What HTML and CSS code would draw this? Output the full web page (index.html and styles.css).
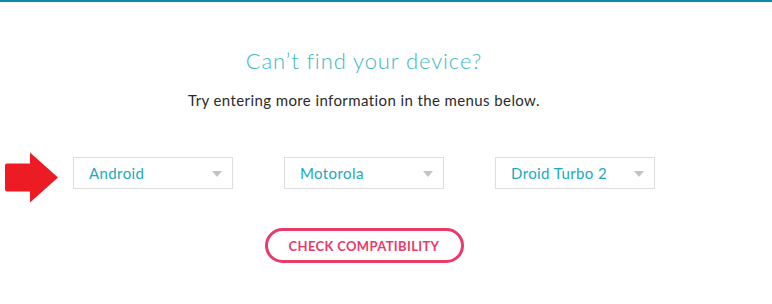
FILE: index.html
```html
<!DOCTYPE html>
<html>
<head>
<meta charset="utf-8">
<link rel="stylesheet" href="styles.css">
</head>
<body>
<div class="topbar"></div>
<main class="panel">
  <h1 class="title">Can’t find your device?</h1>
  <p class="subtitle">Try entering more information in the menus below.</p>
  <div class="selects">
    <svg class="arrow" width="54" height="51" viewBox="0 0 54 51">
      <path d="M2 11.5 H25 V0.5 L53 25.5 L25 50.5 V39.5 H2 Q0 39.5 0 37.5 V13.5 Q0 11.5 2 11.5 Z" fill="#ed1c24"/>
    </svg>
    <div class="select"><span>Android</span><i class="caret"></i></div>
    <div class="select"><span>Motorola</span><i class="caret"></i></div>
    <div class="select"><span>Droid Turbo 2</span><i class="caret"></i></div>
  </div>
  <button class="check">CHECK COMPATIBILITY</button>
</main>
</body>
</html>
```
FILE: styles.css
```css
html, body {
  margin: 0;
  padding: 0;
  background: #fff;
}
body {
  font-family: Lato, "Liberation Sans", sans-serif;
}
.topbar {
  height: 2px;
  background: #0b8ba3;
}
.panel {
  width: 728px;
  display: flex;
  flex-direction: column;
  align-items: center;
  position: relative;
}
.title {
  margin: 44px 0 0;
  font-size: 22px;
  font-weight: 300;
  color: #3cb8c5;
  line-height: 30px;
  letter-spacing: 0.9px;
}
.subtitle {
  margin: 14px 0 0;
  font-size: 15px;
  color: #2a2a2a;
  line-height: 20px;
  letter-spacing: 0.4px;
}
.selects {
  margin-top: 47px;
  display: flex;
  gap: 51px;
}
.arrow {
  position: absolute;
  left: 5px;
  top: 150px;
}
.select {
  box-sizing: border-box;
  width: 160px;
  height: 32px;
  border: 1px solid #dedede;
  display: flex;
  align-items: center;
  justify-content: space-between;
  padding: 0 10px 0 15px;
  color: #1aa9bf;
  font-size: 15px;
  letter-spacing: 0.4px;
}
.caret {
  width: 0;
  height: 0;
  border-left: 5px solid transparent;
  border-right: 5px solid transparent;
  border-top: 6px solid #c4c4c4;
  margin-top: 1px;
}
.check {
  margin-top: 39px;
  box-sizing: border-box;
  width: 199px;
  height: 35px;
  border: 3px solid #e93a69;
  border-radius: 18px;
  background: #fff;
  color: #e93a69;
  font-family: Lato, "Liberation Sans", sans-serif;
  font-weight: 700;
  font-size: 13px;
  letter-spacing: 0.35px;
  padding: 0;
}
```
